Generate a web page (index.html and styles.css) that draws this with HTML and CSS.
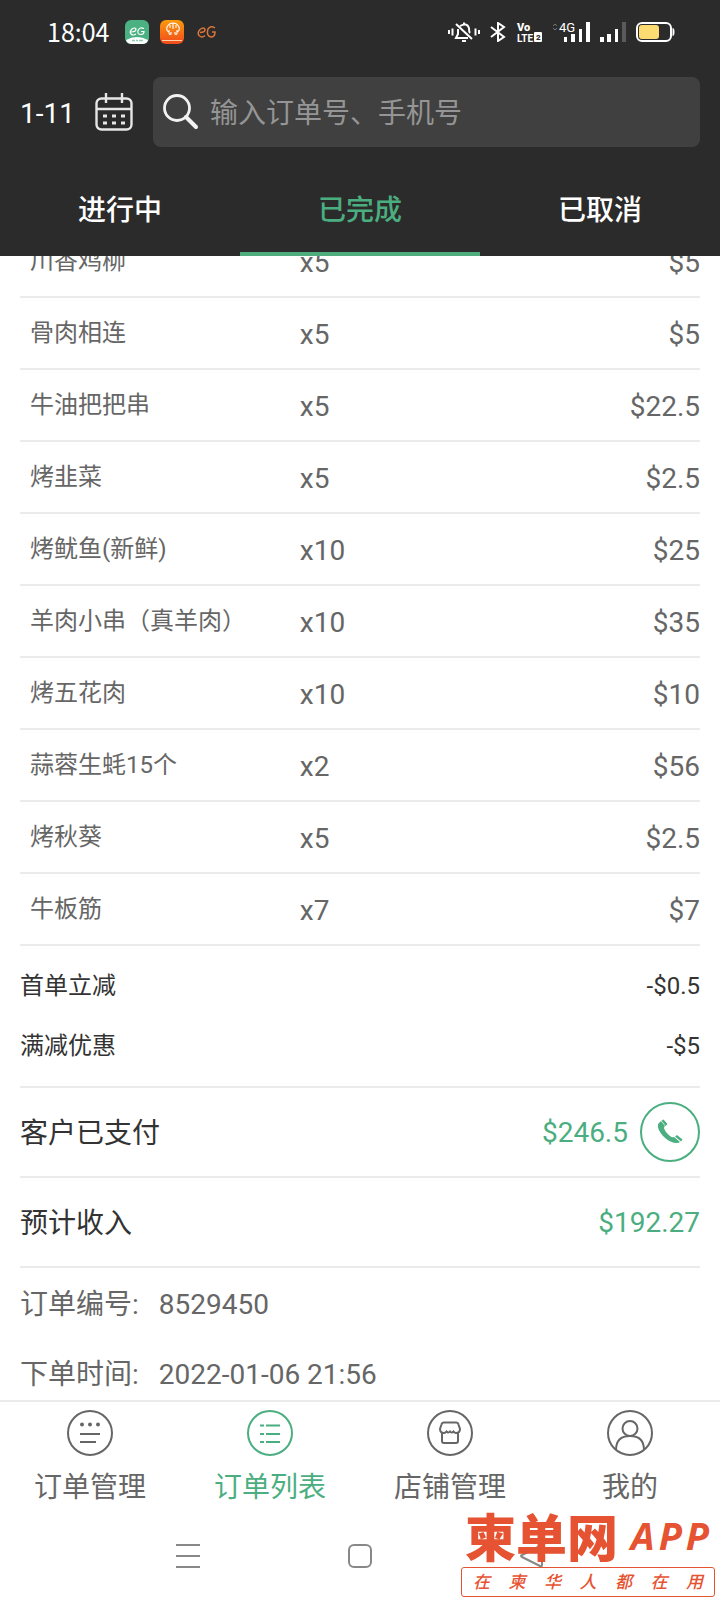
FILE: index.html
```html
<!DOCTYPE html>
<html lang="zh-CN">
<head>
<meta charset="utf-8">
<meta name="viewport" content="width=device-width, initial-scale=1">
<title>订单列表</title>
<link rel="stylesheet" href="styles.css">
</head>
<body>
<div class="app">
  <header class="header">
    <div class="status">
      <span class="status-time">18:04</span>
      <svg class="status-app" width="24" height="24" viewBox="0 0 24 24">
        <rect width="24" height="24" rx="6" fill="#4bb182"/>
        <path d="M1 20q11-6 22 0q-1 4-6 4H7q-5 0-6-4z" fill="#fff"/>
        <path d="M7 20.500h3M11 20.500h2M14 20.500h4" stroke="#8fcfb0" stroke-width="1.500"/>
        <path d="M6 12q5 0 5-3q-1-2-4 0q-3 3-1 5q2 2 5 0M19 8.500q-4-2-6 2q-1 4 3 4q3 0 3-3h-3" fill="none" stroke="#fff" stroke-width="1.200"/>
      </svg>
      <svg class="status-app" width="24" height="24" viewBox="0 0 24 24">
        <defs><linearGradient id="orange" x2="0" y2="1"><stop stop-color="#fb9a0c"/><stop offset="1" stop-color="#f04a1d"/></linearGradient></defs>
        <rect width="24" height="24" rx="6" fill="url(#orange)"/>
        <path d="M2 20.500h20" stroke="#ffd0a0"/>
        <path d="M9 12q-3-1-2-5q2-4 6-4t6 4q1 4-2 5M13 3v6M10 5v3M16 5v3M9 10v3q0 2 2 1v-2M17 10v3q0 2-2 1v-2" fill="none" stroke="#fff" stroke-width="1.100"/>
      </svg>
      <svg class="status-mini" width="20" height="12" viewBox="0 0 20 12">
        <path d="M3 6.500q5 0 5-3q-1-3-5 0q-3 3-1 6q3 3 6 0M18 2q-4-3-7 1q-2 7 3 8q4 0 4-5h-3" fill="none" stroke="#d9763a" stroke-width="1.500"/>
      </svg>
      <div class="status-right">
        <svg width="32" height="20" viewBox="0 0 32 20" fill="none" stroke="#fff" stroke-width="2">
          <path d="M1 8v4M4.500 6.500v7M27.500 6.500v7M31 8v4M8 2l16 15M12 4q7-4 9 2q0 4 1 5M10 7v5l-2 4h12M16 .5v2M14 19h4"/>
        </svg>
        <svg width="16" height="20" viewBox="0 0 16 20" fill="none" stroke="#fff" stroke-width="2">
          <path d="M1 5l13 10-6 4V1l6 4L1 15"/>
        </svg>
        <svg width="26" height="22" viewBox="0 0 26 22">
          <g fill="#fff" font-family="Roboto, sans-serif" font-weight="900">
            <text x="1" y="10" font-size="11">Vo</text>
            <text x="1" y="21" font-size="10" font-weight="700">LTE</text>
            <rect x="18" y="11" width="8" height="10" rx="1"/>
            <text x="20" y="19" font-size="8" fill="#2b2b2b">2</text>
          </g>
        </svg>
        <svg width="38" height="20" viewBox="0 0 38 20" fill="#fff">
          <path d="M1 4l2-2 2 2M1 6l2 2 2-2" fill="none" stroke="#777"/>
          <text x="7" y="10" font-size="13" font-family="Roboto, sans-serif">4G</text>
          <rect x="12" y="15" width="3" height="5"/><rect x="19" y="12" width="4" height="8"/><rect x="27" y="7" width="3" height="13"/><rect x="34" width="4" height="20"/>
        </svg>
        <svg width="26" height="20" viewBox="0 0 26 20" fill="#fff">
          <rect y="15" width="4" height="5"/><rect x="7" y="12" width="4" height="8"/><rect x="15" y="7" width="3" height="13"/><rect x="22" width="4" height="20" fill="#5a5a5a"/>
        </svg>
        <svg width="39" height="20" viewBox="0 0 39 20">
          <rect x="1" y="1" width="34" height="18" rx="5" fill="none" stroke="#fff" stroke-width="2"/>
          <rect x="3" y="3" width="20" height="14" rx="3" fill="#fcdb73"/><path d="M36.500 6q2 0 2 4t-2 4z" fill="#fff"/>
        </svg>
      </div>
    </div>
    <div class="search-row">
      <button class="date" type="button"><span>1-11</span>
        <svg width="38" height="38" viewBox="0 0 38 38" fill="none" stroke="#e6e6e6" stroke-width="2.400">
          <rect x="1.500" y="5.500" width="35" height="31" rx="5"/><path d="M1 16h36M11 0v10M27 0v10"/>
          <path d="M8 23h4M17 23h4M26 23h4M8 30h4M17 30h4M26 30h4" stroke-width="3"/>
        </svg>
      </button>
      <label class="search">
        <svg width="36" height="36" viewBox="0 0 36 36" fill="none" stroke="#f2f2f2">
          <circle cx="14" cy="14" r="12.500" stroke-width="2.800"/><path d="M23 23l10 10" stroke-width="4" stroke-linecap="round"/>
        </svg>
        <input type="text" class="search-input" aria-label="搜索订单" placeholder="输入订单号、手机号">
      </label>
    </div>
    <nav class="tabs">
      <button class="tab" type="button">进行中</button>
      <button class="tab tab-active" type="button">已完成</button>
      <button class="tab" type="button">已取消</button>
    </nav>
  </header>

  <main class="content">
    <table class="items">
      <tbody>
      <tr><td class="name">川香鸡柳</td><td class="qty">x5</td><td class="price">$5</td></tr>
      <tr><td class="name">骨肉相连</td><td class="qty">x5</td><td class="price">$5</td></tr>
      <tr><td class="name">牛油把把串</td><td class="qty">x5</td><td class="price">$22.5</td></tr>
      <tr><td class="name">烤韭菜</td><td class="qty">x5</td><td class="price">$2.5</td></tr>
      <tr><td class="name">烤鱿鱼(新鲜)</td><td class="qty">x10</td><td class="price">$25</td></tr>
      <tr><td class="name">羊肉小串（真羊肉）</td><td class="qty">x10</td><td class="price">$35</td></tr>
      <tr><td class="name">烤五花肉</td><td class="qty">x10</td><td class="price">$10</td></tr>
      <tr><td class="name">蒜蓉生蚝15个</td><td class="qty">x2</td><td class="price">$56</td></tr>
      <tr><td class="name">烤秋葵</td><td class="qty">x5</td><td class="price">$2.5</td></tr>
      <tr><td class="name">牛板筋</td><td class="qty">x7</td><td class="price">$7</td></tr>
      </tbody>
    </table>
    <div class="discounts">
      <div class="discount"><span>首单立减</span><span>-$0.5</span></div>
      <div class="discount"><span>满减优惠</span><span>-$5</span></div>
    </div>
    <div class="total">
      <span class="total-label">客户已支付</span>
      <span class="amount">$246.5</span>
      <button class="call" type="button" aria-label="拨打电话">
        <svg width="26" height="26" viewBox="0 0 26 26" fill="#4bae80">
          <path d="M1 5q-1 5 5 12q7 7 13 7q3 0 4-1l-6-5q-2 1-4-1q-5-4-6-8q0-1 1-2L4 2z"/>
          <path d="M4.500 1.500l2-1 4 4.500-2 2zM18 17.500l2-1.500 5.500 4.500-1.500 2z"/>
        </svg>
      </button>
    </div>
    <div class="total"><span class="total-label">预计收入</span><span class="amount">$192.27</span></div>
    <dl class="meta">
      <div class="meta-row"><dt>订单编号:</dt><dd>8529450</dd></div>
      <div class="meta-row"><dt>下单时间:</dt><dd>2022-01-06 21:56</dd></div>
    </dl>
  </main>

  <nav class="bottom-nav">
    <a class="nav-item" href="#manage">
      <svg width="46" height="46" viewBox="0 0 46 46" fill="none" stroke="currentColor" stroke-width="2">
        <circle cx="23" cy="23" r="22"/><path d="M13 24h20M13 32h16"/>
        <g fill="currentColor" stroke="none"><circle cx="15" cy="14.500" r="2"/><circle cx="23" cy="14.500" r="2"/><circle cx="31" cy="14.500" r="2"/></g>
      </svg>
      订单管理
    </a>
    <a class="nav-item nav-active" href="#list">
      <svg width="46" height="46" viewBox="0 0 46 46" fill="none" stroke="currentColor" stroke-width="2">
        <circle cx="23" cy="23" r="22"/><path d="M13 15.500h4M19 15.500h14M13 24h4M19 24h14M13 32h4M19 32h14"/>
      </svg>
      订单列表
    </a>
    <a class="nav-item" href="#shop">
      <svg width="46" height="46" viewBox="0 0 46 46" fill="none" stroke="currentColor" stroke-width="2">
        <circle cx="23" cy="23" r="22"/>
        <path d="M17 12.500h12q2 0 2.500 2l1.500 4.500q0 4-4 4q-1.500 0-2.500-1.500q-2 2-3.500 0q-1.500 2-3.500 0q-1 1.500-2.500 1.500q-4 0-4-4l1.500-4.500q.5-2 2.500-2zM15 23v8q0 2 2 2h12q2 0 2-2v-8"/>
      </svg>
      店铺管理
    </a>
    <a class="nav-item" href="#me">
      <svg width="46" height="46" viewBox="0 0 46 46" fill="none" stroke="currentColor" stroke-width="2">
        <circle cx="23" cy="23" r="22"/><circle cx="23" cy="18.500" r="7.500"/><path d="M9 40q0-14 14-14t14 14"/>
      </svg>
      我的
    </a>
  </nav>

  <footer class="system-nav">
    <button class="system-button" type="button" aria-label="最近任务">
      <svg width="24" height="24" viewBox="0 0 24 24" stroke="#888" stroke-width="2"><path d="M0 1h24M0 12h24M0 23h24"/></svg>
    </button>
    <button class="system-button" type="button" aria-label="主屏幕">
      <svg width="24" height="24" viewBox="0 0 24 24" fill="none" stroke="#888" stroke-width="2"><rect x="1" y="1" width="22" height="22" rx="5"/></svg>
    </button>
    <button class="system-button" type="button" aria-label="返回">
      <svg width="24" height="24" viewBox="0 0 24 24" fill="none" stroke="#888" stroke-width="2"><path d="M22 3v18q0 2-2 1L2 13q-2-1 0-2L20 2q2-1 2 1z"/></svg>
    </button>
    <div class="watermark">
      <div class="brand"><span class="brand-cn">柬单网</span><span class="brand-en"><span>A</span><span>P</span><span>P</span></span></div>
      <div class="tagline"><span>在</span><span>柬</span><span>华</span><span>人</span><span>都</span><span>在</span><span>用</span></div>
    </div>
  </footer>
</div>
</body>
</html>
```

FILE: styles.css
```css
* { box-sizing: border-box; }

body {
  margin: 0;
  background: #fff;
  color: #333;
  font-family: Roboto, "Noto Sans CJK SC", sans-serif;
  font-size: 28px;
  line-height: 40px;
}

button {
  margin: 0;
  padding: 0;
  border: 0;
  background: none;
  color: inherit;
  font: inherit;
}

svg { display: block; flex: none; }

.app {
  display: flex;
  flex-direction: column;
  height: 100vh;
}

.header { background: #2b2b2b; color: #fff; }

.status {
  display: flex;
  align-items: center;
  height: 64px;
  padding: 0 45px 0 47px;
}

.status-time {
  padding-bottom: 2px;
  font-family: "Noto Sans CJK SC", sans-serif;
  font-size: 25px;
  margin-right: 16px;
}

.status-app { margin-right: 11px; }
.status-mini { margin-left: 2px; }

.status-right {
  display: flex;
  align-items: center;
  gap: 10px;
  margin-left: auto;
}

.search-row {
  display: flex;
  align-items: center;
  gap: 20px;
  padding: 13px 20px 15px;
}

.date { display: flex; align-items: center; gap: 20px; }
.date span { padding-top: 4px; }

.search {
  display: flex;
  flex: 1;
  align-items: center;
  gap: 11px;
  height: 70px;
  padding: 0 10px;
  border-radius: 8px;
  background: #404040;
}

.search-input {
  flex: 1;
  min-width: 0;
  padding: 4px 0 0;
  border: 0;
  outline: 0;
  background: none;
  color: #fff;
  font: inherit;
}

.search-input::placeholder { color: #959595; opacity: 1; }

.tabs { display: flex; }

.tab {
  flex: 1;
  height: 94px;
  padding-top: 4px;
  border: solid transparent;
  border-width: 4px 0;
  font-weight: 500;
}

.tab-active { border-bottom-color: #4fad7d; color: #4bae80; }

.content {
  flex: 1;
  min-height: 0;
  overflow: hidden;
  padding: 0 20px;
}

.items {
  width: 100%;
  margin-top: -31px;
  border-collapse: collapse;
  table-layout: fixed;
  color: #666;
}

.items tr { height: 72px; border-bottom: 2px solid #ebebeb; }
.items td { padding: 4px 0 0; }
.items .name { width: 41%; padding: 0 0 0 10px; font-size: 24px; }
.items .qty { padding-left: 1px; }
.items .price { text-align: right; }

.discounts {
  padding: 10px 0;
  border-bottom: 2px solid #ebebeb;
  font-size: 24px;
}

.discount {
  display: flex;
  align-items: center;
  justify-content: space-between;
  height: 60px;
}

.total {
  display: flex;
  align-items: center;
  height: 90px;
  border-bottom: 2px solid #ebebeb;
}

.total-label { padding-top: 4px; }
.amount { margin-left: auto; padding-top: 2px; color: #4bae80; }

.call {
  display: flex;
  align-items: center;
  justify-content: center;
  width: 60px;
  height: 60px;
  margin-left: 12px;
  border: 2px solid #4bae80;
  border-radius: 50%;
}

.meta { margin: 0; padding-top: 2px; color: #666; }
.meta-row { display: flex; align-items: center; gap: 20px; height: 70px; }
.meta dd { margin: 0; }

.bottom-nav {
  display: flex;
  border-top: 2px solid #ebebeb;
  background: #fff;
}

.nav-item {
  display: flex;
  flex: 1;
  flex-direction: column;
  align-items: center;
  gap: 12px;
  padding: 8px 0 2px;
  color: #666;
  text-decoration: none;
}

.nav-active { color: #4bae80; }

.system-nav {
  display: flex;
  position: relative;
  align-items: center;
  justify-content: center;
  gap: 148px;
  height: 90px;
  padding-top: 2px;
}

.system-button { display: flex; }

.watermark {
  position: absolute;
  right: 5px;
  bottom: 3px;
  width: 254px;
  color: #e65332;
  font-weight: 900;
}

.brand {
  display: flex;
  align-items: center;
  justify-content: space-between;
  padding: 0 6px 5px 4px;
  line-height: 54px;
}

.brand-cn { font-family: "Noto Sans CJK SC", sans-serif; font-size: 51px; }

.brand-en {
  display: flex;
  gap: 4px;
  font-family: "Open Sans", sans-serif;
  font-size: 38px;
  font-style: italic;
  font-weight: 700;
}

.tagline {
  display: flex;
  justify-content: space-between;
  padding: 0 11px;
  border: 1px solid #e65332;
  border-radius: 3px;
  font-size: 17px;
  font-style: italic;
  font-weight: 500;
  line-height: 28px;
}
```
